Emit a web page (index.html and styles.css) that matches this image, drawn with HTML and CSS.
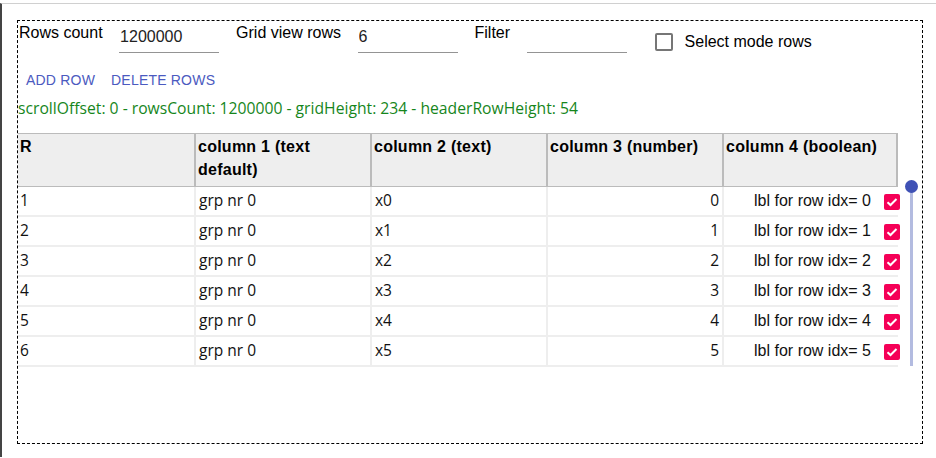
FILE: index.html
```html
<!DOCTYPE html>
<html>
<head>
<meta charset="utf-8">
<link rel="stylesheet" href="styles.css">
</head>
<body>
<div class="frame">
  <div class="box">
    <div class="controls">
      <div class="field"><span class="lbl">Rows count</span><input class="inp" value="1200000"></div>
      <div class="field"><span class="lbl">Grid view rows</span><input class="inp" value="6"></div>
      <div class="field"><span class="lbl">Filter</span><input class="inp" value=""></div>
      <label class="sel"><span class="cb"></span><span>Select mode rows</span></label>
    </div>
    <div class="buttons">
      <button class="btn">Add row</button><button class="btn">Delete rows</button>
    </div>
    <div class="info">scrollOffset: 0 - rowsCount: 1200000 - gridHeight: 234 - headerRowHeight: 54</div>
    <div class="gridwrap">
      <div class="grid">
        <div class="hrow">
          <div class="hc">R</div>
          <div class="hc">column 1 (text default)</div>
          <div class="hc">column 2 (text)</div>
          <div class="hc">column 3 (number)</div>
          <div class="hc">column 4 (boolean)</div>
        </div>
        <div class="row"><div class="c">1</div><div class="c">grp nr 0</div><div class="c">x0</div><div class="c num">0</div><div class="c bool"><span>lbl for row idx= 0</span><span class="chk"><svg viewBox="0 0 16 16" width="16" height="16"><path d="M3.5 8.2l3 2.8 6-6" fill="none" stroke="#fff" stroke-width="2"/></svg></span></div></div>
        <div class="row"><div class="c">2</div><div class="c">grp nr 0</div><div class="c">x1</div><div class="c num">1</div><div class="c bool"><span>lbl for row idx= 1</span><span class="chk"><svg viewBox="0 0 16 16" width="16" height="16"><path d="M3.5 8.2l3 2.8 6-6" fill="none" stroke="#fff" stroke-width="2"/></svg></span></div></div>
        <div class="row"><div class="c">3</div><div class="c">grp nr 0</div><div class="c">x2</div><div class="c num">2</div><div class="c bool"><span>lbl for row idx= 2</span><span class="chk"><svg viewBox="0 0 16 16" width="16" height="16"><path d="M3.5 8.2l3 2.8 6-6" fill="none" stroke="#fff" stroke-width="2"/></svg></span></div></div>
        <div class="row"><div class="c">4</div><div class="c">grp nr 0</div><div class="c">x3</div><div class="c num">3</div><div class="c bool"><span>lbl for row idx= 3</span><span class="chk"><svg viewBox="0 0 16 16" width="16" height="16"><path d="M3.5 8.2l3 2.8 6-6" fill="none" stroke="#fff" stroke-width="2"/></svg></span></div></div>
        <div class="row"><div class="c">5</div><div class="c">grp nr 0</div><div class="c">x4</div><div class="c num">4</div><div class="c bool"><span>lbl for row idx= 4</span><span class="chk"><svg viewBox="0 0 16 16" width="16" height="16"><path d="M3.5 8.2l3 2.8 6-6" fill="none" stroke="#fff" stroke-width="2"/></svg></span></div></div>
        <div class="row"><div class="c">6</div><div class="c">grp nr 0</div><div class="c">x5</div><div class="c num">5</div><div class="c bool"><span>lbl for row idx= 5</span><span class="chk"><svg viewBox="0 0 16 16" width="16" height="16"><path d="M3.5 8.2l3 2.8 6-6" fill="none" stroke="#fff" stroke-width="2"/></svg></span></div></div>
      </div>
      <div class="scroll"><span class="track"></span><span class="thumb"></span></div>
    </div>
  </div>
</div>
</body>
</html>
```

FILE: styles.css
```css
html, body { margin: 0; padding: 0; background: #fff; }
body { font-family: "Liberation Sans", Arial, sans-serif; font-size: 16px; color: #000; }
.frame {
  margin-top: 3px;
  border-top: 1px solid #d0d0d0;
  border-left: 2px solid #444;
  height: 454px;
  box-sizing: border-box;
  padding: 16px 13px 0 15px;
}
.box {
  border: 1px dashed #000;
  height: 424px;
  box-sizing: border-box;
  padding: 2px 0 0 0;
}
.controls { display: flex; align-items: flex-start; padding-left: 1px; }
.field { display: flex; align-items: flex-start; margin-right: 17px; }
.lbl { line-height: 18px; margin-top: 1px; margin-right: 16.5px; }
.inp {
  width: 100px; box-sizing: border-box; height: 29px;
  border: none; border-bottom: 1px solid #949494; outline: none;
  font: 16px "Liberation Sans", Arial, sans-serif; color: #222;
  padding: 3px 0 5px 1px; margin-top: 1px; background: transparent;
}
.sel { display: flex; align-items: center; margin-left: 11px; margin-top: 10px; }
.cb { width: 14px; height: 14px; border: 2px solid #767676; border-radius: 2px; margin-right: 12px; }
.buttons { display: flex; margin-top: 16px; padding-left: 0; }
.btn {
  border: none; background: none; text-transform: uppercase;
  font: 14px "Liberation Sans", Arial, sans-serif; color: #4b5ac0;
  padding: 0 8px; height: 22px; letter-spacing: 0.2px;
}
.info {
  color: #16861c; font-family: "Open Sans", sans-serif; font-size: 15.7px;
  margin-top: 6px; line-height: 22px;
}
.gridwrap { display: flex; margin-top: 14px; }
.grid { width: 882px; }
.hrow {
  display: flex; width: 880px; height: 54px; box-sizing: border-box;
  background: #eee; border-top: 1px solid #bbb; border-bottom: 1px solid #bbb; border-right: 2px solid #bbb;
}
.hc {
  flex: none; width: 176px; box-sizing: border-box; padding: 1px 2px 0 2px;
  font-weight: bold; font-size: 16px; line-height: 23px; letter-spacing: 0.25px; border-right: 2px solid #bbb;
}
.hc:first-child { width: 178px; }
.hc:last-child { border-right: none; width: 172px; }
.row { display: flex; width: 880px; height: 30px; box-sizing: border-box; border-bottom: 2px solid #eee; }
.c {
  flex: none; width: 176px; box-sizing: border-box; padding: 2px 3px 0 2px;
  font-family: "Open Sans", sans-serif; font-size: 15.5px; line-height: 22px; color: #111;
  border-right: 2px solid #eee;
}
.c:first-child { width: 178px; }
.c:nth-child(2), .c:nth-child(3) { padding-left: 3px; }
.c:last-child { border-right: none; width: 177px; }
.num { text-align: right; }
.bool { display: flex; justify-content: flex-end; align-items: center; padding: 0 1px 0 0; font-family: "Liberation Sans", Arial, sans-serif; font-size: 16px; }
.chk {
  width: 16px; height: 16px; background: #f50057; border-radius: 2px; margin-left: 13px; margin-top: 1px;
  display: flex;
}
.scroll { position: relative; width: 20px; margin-left: 3px; }
.track { position: absolute; left: 8px; top: 53px; width: 3px; height: 180px; background: #b3bbe0; }
.thumb { position: absolute; left: 3px; top: 47px; width: 13px; height: 13px; border-radius: 50%; background: #3f51b5; }
```
